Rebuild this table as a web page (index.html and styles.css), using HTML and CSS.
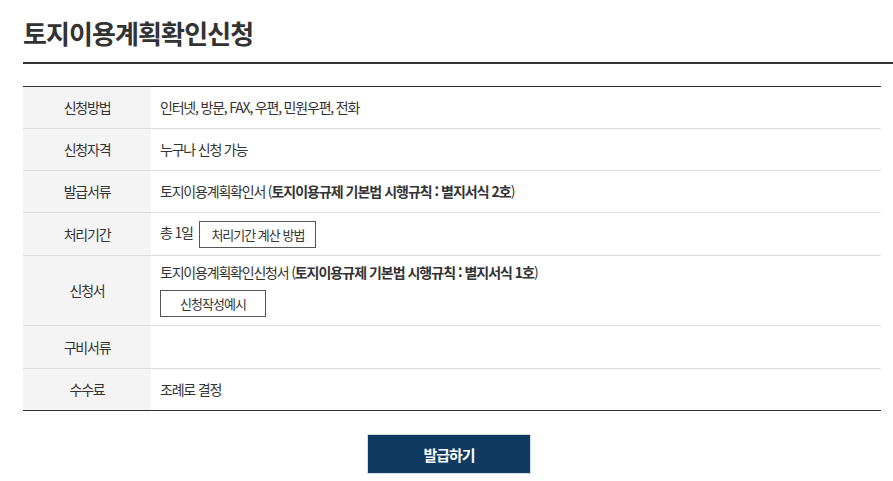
FILE: index.html
```html
<!DOCTYPE html>
<html lang="ko">
<head>
<meta charset="utf-8">
<title>토지이용계획확인신청</title>
<link rel="stylesheet" href="styles.css">
</head>
<body>
<div class="page">
  <h1 class="title">토지이용계획확인신청</h1>
  <table class="info">
    <tbody>
      <tr>
        <th>신청방법</th>
        <td>인터넷, 방문, FAX, 우편, 민원우편, 전화</td>
      </tr>
      <tr>
        <th>신청자격</th>
        <td>누구나 신청 가능</td>
      </tr>
      <tr>
        <th>발급서류</th>
        <td>토지이용계획확인서 (<b>토지이용규제 기본법 시행규칙 : 별지서식 2호</b>)</td>
      </tr>
      <tr class="tall">
        <th>처리기간</th>
        <td>총 1일 <button class="small-btn" type="button">처리기간 계산 방법</button></td>
      </tr>
      <tr>
        <th>신청서</th>
        <td class="multi">
          <div>토지이용계획확인신청서 (<b>토지이용규제 기본법 시행규칙 : 별지서식 1호</b>)</div>
          <button class="small-btn example" type="button">신청작성예시</button>
        </td>
      </tr>
      <tr class="tall">
        <th>구비서류</th>
        <td></td>
      </tr>
      <tr>
        <th>수수료</th>
        <td>조례로 결정</td>
      </tr>
    </tbody>
  </table>
  <div class="actions">
    <button class="issue-btn" type="button">발급하기</button>
  </div>
</div>
</body>
</html>
```

FILE: styles.css
```css
html, body {
  margin: 0;
  padding: 0;
  background: #fff;
}

body {
  font-family: "Noto Sans CJK KR", "Noto Sans", sans-serif;
  color: #333;
  overflow: hidden;
}

.page {
  padding: 15px 0 0 23px;
}

.title {
  width: 870px;
  margin: 0;
  padding: 0 0 11px;
  font-size: 26px;
  line-height: 36px;
  font-weight: 700;
  letter-spacing: -0.9px;
  color: #333;
  border-bottom: 2px solid #333;
}

.info {
  width: 858px;
  margin-top: 22px;
  border-collapse: collapse;
  border-top: 1px solid #333;
  border-bottom: 1px solid #333;
  font-size: 14px;
  letter-spacing: -1.2px;
  line-height: 21px;
}

.info th,
.info td {
  height: 41px;
  padding: 0 9px;
  border-bottom: 1px solid #ddd;
  vertical-align: middle;
}

.info tr.tall th,
.info tr.tall td {
  height: 42px;
}

.info tr:last-child th,
.info tr:last-child td {
  border-bottom: 1px solid #333;
}

.info th {
  width: 110px;
  background: #f4f4f4;
  font-weight: 400;
  color: #333;
  text-align: center;
}

.info td {
  text-align: left;
  color: #333;
}

.info b {
  font-weight: 700;
  letter-spacing: -1px;
}

.info td.multi {
  padding-top: 6px;
  padding-bottom: 8px;
}

.small-btn {
  height: 27px;
  margin-left: 4px;
  padding: 0 11px;
  border: 1px solid #555;
  background: #fff;
  font-family: inherit;
  font-size: 13px;
  letter-spacing: -1px;
  color: #333;
  vertical-align: middle;
}

.small-btn.example {
  margin: 7px 0 0;
  width: 106px;
}

.actions {
  width: 858px;
  margin-top: 23px;
  display: flex;
  justify-content: center;
  padding-right: 6px;
  box-sizing: border-box;
}

.issue-btn {
  width: 164px;
  height: 40px;
  border: 1px solid #d6dbe0;
  background: #0f3a62;
  color: #fff;
  font-family: inherit;
  font-size: 15px;
  font-weight: 700;
  letter-spacing: -1px;
}
```
